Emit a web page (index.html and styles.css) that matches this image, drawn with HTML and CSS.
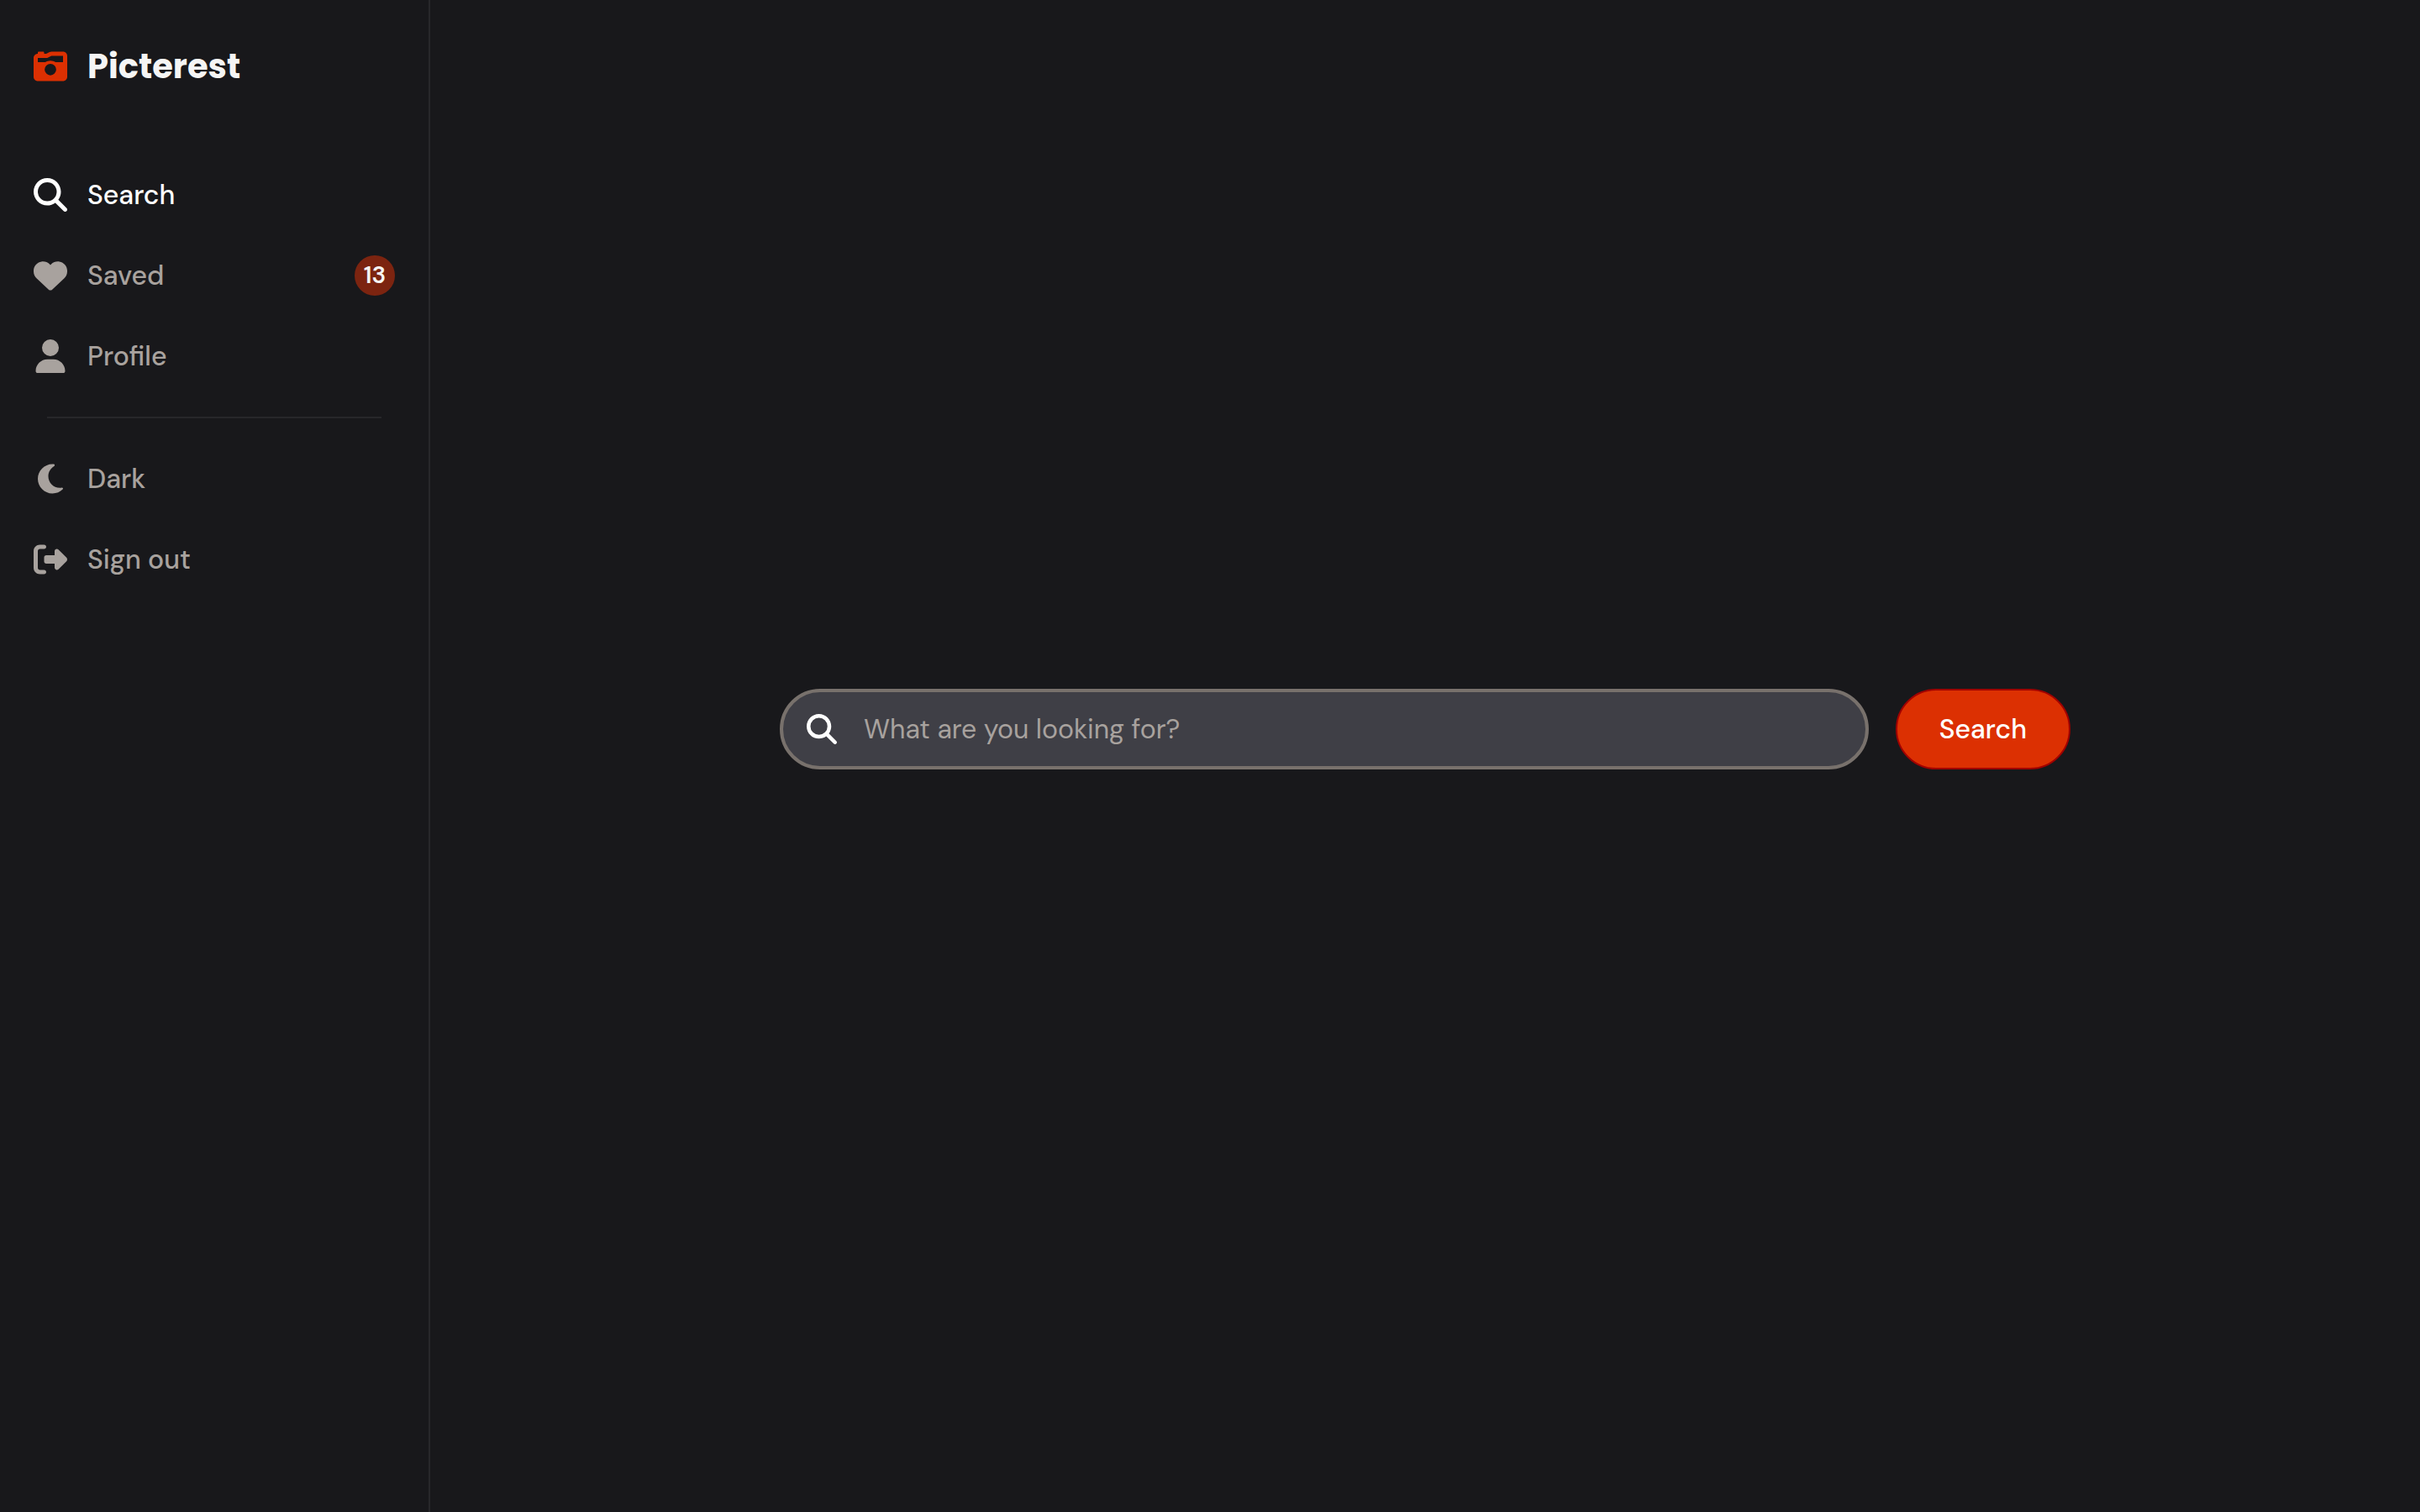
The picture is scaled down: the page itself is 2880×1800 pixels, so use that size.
FILE: index.html
```html
<!DOCTYPE html>
<html lang="en">
<head>
<meta charset="utf-8">
<title>Picterest</title>
<meta name="viewport" content="width=device-width, initial-scale=1">
<link rel="stylesheet" href="styles.css">
</head>
<body>
<div class="app">
  <aside class="sidebar">
    <a class="brand" href="#">
      <svg class="icon brand-icon" viewBox="0 0 512 512" aria-hidden="true"><path d="M220.6 121.2L271.1 96 448 96v96H333.2c-21.9-15.1-48.5-24-77.2-24s-55.2 8.9-77.2 24H64V128H192c9.9 0 19.7-2.3 28.6-6.8zM0 128V416c0 35.3 28.7 64 64 64H448c35.3 0 64-28.7 64-64V96c0-35.3-28.7-64-64-64H271.1c-9.9 0-19.7 2.3-28.6 6.8L192 64H160V48c0-8.8-7.2-16-16-16H80c-8.8 0-16 7.2-16 16V64C28.7 64 0 92.7 0 128zM168 304a88 88 0 1 1 176 0 88 88 0 1 1 -176 0z"/></svg>
      <span>Picterest</span>
    </a>
    <nav class="nav">
      <a class="nav-item active" href="#" aria-current="page">
        <svg class="icon" viewBox="0 0 512 512" aria-hidden="true"><path d="M416 208c0 45.9-14.9 88.3-40 122.7L502.6 457.4c12.5 12.5 12.5 32.8 0 45.3s-32.8 12.5-45.3 0L330.7 376c-34.4 25.2-76.8 40-122.7 40C93.1 416 0 322.9 0 208S93.1 0 208 0S416 93.1 416 208zM208 352a144 144 0 1 0 0-288 144 144 0 1 0 0 288z"/></svg>
        <span>Search</span>
      </a>
      <a class="nav-item" href="#">
        <svg class="icon" viewBox="0 0 512 512" aria-hidden="true"><path d="M47.6 300.4L228.3 469.1c7.5 7 17.4 10.9 27.7 10.9s20.2-3.9 27.7-10.9L464.4 300.4c30.4-28.3 47.6-68 47.6-109.5v-5.8c0-69.9-50.5-129.5-119.4-141C347 36.5 300.6 51.4 268 84L256 96 244 84c-32.6-32.6-79-47.5-124.6-39.9C50.5 55.6 0 115.2 0 185.1v5.8c0 41.5 17.2 81.2 47.6 109.5z"/></svg>
        <span>Saved</span>
        <span class="badge">13</span>
      </a>
      <a class="nav-item" href="#">
        <svg class="icon" viewBox="0 0 448 512" aria-hidden="true"><path d="M224 256A128 128 0 1 0 224 0a128 128 0 1 0 0 256zm-45.7 48C79.8 304 0 383.8 0 482.3C0 498.7 13.3 512 29.7 512H418.3c16.4 0 29.7-13.3 29.7-29.7C448 383.8 368.2 304 269.7 304H178.3z"/></svg>
        <span>Profile</span>
      </a>
      <hr class="divider">
      <button class="nav-item" type="button">
        <svg class="icon" viewBox="0 0 384 512" aria-hidden="true"><path d="M223.5 32C100 32 0 132.3 0 256S100 480 223.5 480c60.6 0 115.5-24.2 155.8-63.4c5-4.9 6.3-12.5 3.1-18.7s-10.1-9.7-17-8.5c-9.8 1.7-19.8 2.6-30.1 2.6c-96.9 0-175.5-78.8-175.5-176c0-65.8 36-123.1 89.3-153.3c6.1-3.5 9.2-10.5 7.7-17.3s-7.3-11.9-14.3-12.5c-6.3-.5-12.6-.8-19-.8z"/></svg>
        <span>Dark</span>
      </button>
      <button class="nav-item" type="button">
        <svg class="icon" viewBox="0 0 512 512" aria-hidden="true"><path d="M377.9 105.9L500.7 228.7c7.2 7.2 11.3 17.1 11.3 27.3s-4.1 20.1-11.3 27.3L377.9 406.1c-6.4 6.4-15 9.9-24 9.9c-18.7 0-33.9-15.2-33.9-33.9l0-62.1-128 0c-17.7 0-32-14.3-32-32l0-64c0-17.7 14.3-32 32-32l128 0 0-62.1c0-18.7 15.2-33.9 33.9-33.9c9 0 17.6 3.6 24 9.9zM160 96L96 96c-17.7 0-32 14.3-32 32l0 256c0 17.7 14.3 32 32 32l64 0c17.7 0 32 14.3 32 32s-14.3 32-32 32l-64 0c-53 0-96-43-96-96L0 128C0 75 43 32 96 32l64 0c17.7 0 32 14.3 32 32s-14.3 32-32 32z"/></svg>
        <span>Sign out</span>
      </button>
    </nav>
  </aside>
  <main class="main">
    <form class="search" role="search">
      <label class="field">
        <svg class="icon field-icon" viewBox="0 0 512 512" aria-hidden="true"><path d="M416 208c0 45.9-14.9 88.3-40 122.7L502.6 457.4c12.5 12.5 12.5 32.8 0 45.3s-32.8 12.5-45.3 0L330.7 376c-34.4 25.2-76.8 40-122.7 40C93.1 416 0 322.9 0 208S93.1 0 208 0S416 93.1 416 208zM208 352a144 144 0 1 0 0-288 144 144 0 1 0 0 288z"/></svg>
        <input class="field-input" type="text" aria-label="Search pictures" placeholder="What are you looking for?">
      </label>
      <button class="submit" type="button">Search</button>
    </form>
  </main>
</div>
</body>
</html>
```
FILE: styles.css
```css
* {
  box-sizing: border-box;
}

body {
  margin: 0;
  background: #18181b;
  color: #f5f5f4;
  font-family: "DM Sans", Inter, sans-serif;
  font-size: 32px;
  line-height: 48px;
}

a {
  color: inherit;
  text-decoration: none;
}

button,
input {
  font: inherit;
}

.app {
  display: flex;
  min-height: 100vh;
}

.sidebar {
  flex: none;
  width: 512px;
  padding: 48px 40px;
  border-right: 2px solid #27272a;
}

.icon {
  flex: none;
  width: 40px;
  height: 40px;
  fill: currentColor;
}

.brand {
  display: flex;
  align-items: center;
  gap: 24px;
  height: 62px;
  margin-bottom: 74px;
  font-family: Poppins, Inter, sans-serif;
  font-size: 40px;
  font-weight: 700;
}

.brand-icon {
  color: #dc3002;
}

.nav {
  display: flex;
  flex-direction: column;
}

.nav-item {
  display: flex;
  align-items: center;
  gap: 24px;
  height: 96px;
  padding: 0;
  border: 0;
  background: none;
  color: #a8a29e;
  font-weight: 500;
  text-align: left;
  cursor: pointer;
}

.nav-item.active {
  color: #fff;
}

.badge {
  display: grid;
  place-items: center;
  width: 48px;
  height: 48px;
  margin-left: auto;
  border-radius: 50%;
  background: #7c2410;
  color: #f5f5f4;
  font-size: 28px;
  font-weight: 600;
}

.divider {
  align-self: stretch;
  margin: 24px 16px;
  border: 0;
  border-top: 2px solid #27272a;
}

.main {
  display: flex;
  flex: 1;
  align-items: center;
  justify-content: center;
  padding: 0 64px 64px;
}

.search {
  display: flex;
  gap: 32px;
  width: 100%;
  max-width: 1536px;
}

.field {
  display: flex;
  flex: 1;
  align-items: center;
  gap: 32px;
  height: 96px;
  padding: 0 28px;
  border: 4px solid #78716c;
  border-radius: 48px;
  background: #3f3f46;
}

.field-icon {
  width: 36px;
  height: 36px;
  color: #fff;
}

.field-input {
  flex: 1;
  min-width: 0;
  padding: 0;
  border: 0;
  outline: 0;
  background: none;
  color: #f5f5f4;
}

.field-input::placeholder {
  color: #a8a29e;
  opacity: 1;
}

.submit {
  padding: 0 50px;
  border: 2px solid #a00000;
  border-radius: 48px;
  background: #dc3002;
  color: #fff;
  font-weight: 500;
  cursor: pointer;
}
```
